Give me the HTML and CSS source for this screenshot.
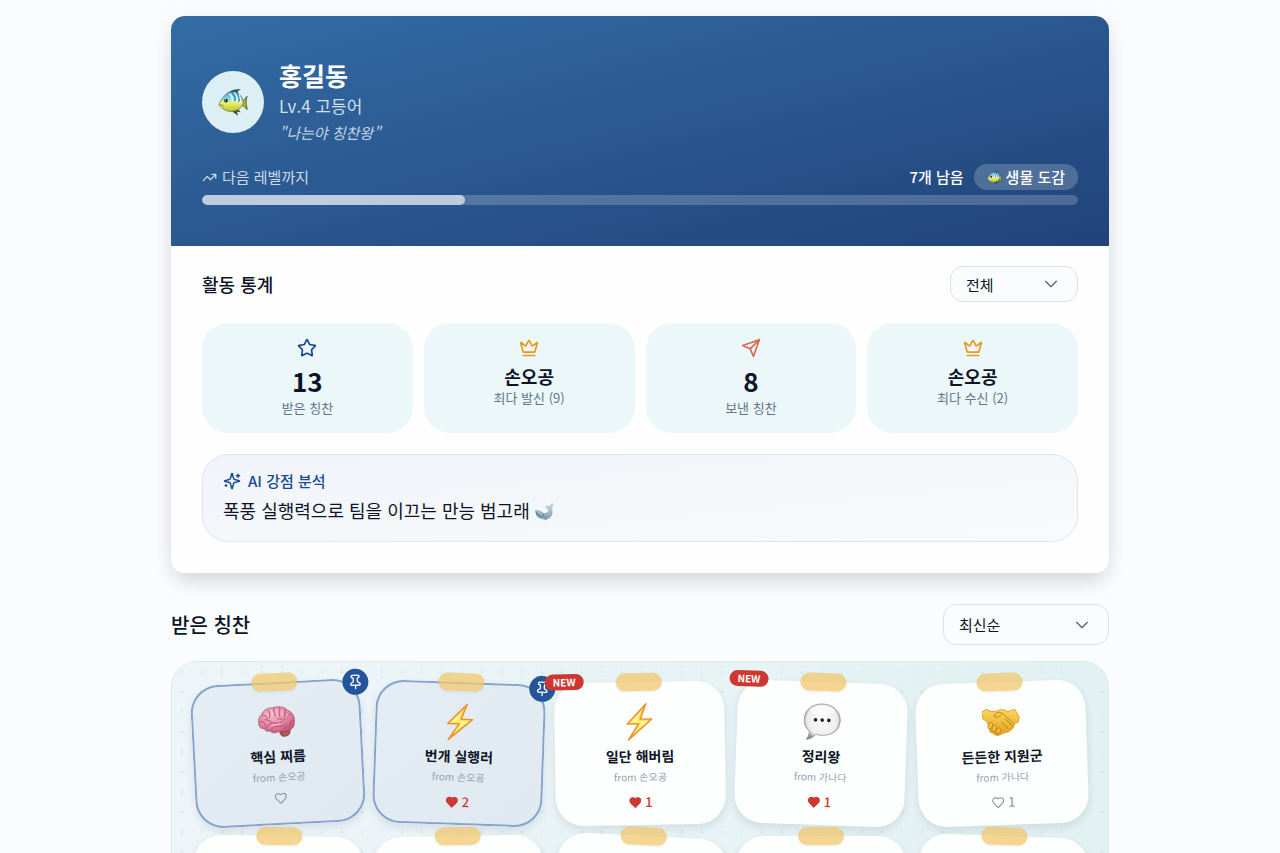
FILE: index.html
```html
<!DOCTYPE html>
<html lang="ko">
<head>
  <meta charset="UTF-8">
  <meta name="viewport" content="width=device-width, initial-scale=1.0">
  <title>홍길동 - 받은 칭찬</title>
  <link rel="stylesheet" href="styles.css">
</head>
<body>
  <!-- 아이콘 모음 -->
  <svg class="sprite" aria-hidden="true">
    <defs>
      <linearGradient id="fishBody" x1="0" y1="0" x2="0" y2="1">
        <stop offset="0" stop-color="#3fa6cf"/>
        <stop offset=".38" stop-color="#8fd8ec"/>
        <stop offset=".56" stop-color="#eef06e"/>
        <stop offset="1" stop-color="#b9c232"/>
      </linearGradient>
      <linearGradient id="boltFill" x1="0" y1="0" x2="0" y2="1">
        <stop offset="0" stop-color="#f9b233"/>
        <stop offset=".5" stop-color="#ffe94f"/>
        <stop offset="1" stop-color="#f29a2e"/>
      </linearGradient>
      <radialGradient id="brainFill" cx=".4" cy=".3" r=".8">
        <stop offset="0" stop-color="#f7b9cb"/>
        <stop offset=".6" stop-color="#e2809f"/>
        <stop offset="1" stop-color="#b84f6e"/>
      </radialGradient>
      <radialGradient id="bubbleFill" cx=".5" cy=".45" r=".56">
        <stop offset="0" stop-color="#ffffff"/>
        <stop offset=".75" stop-color="#ececec"/>
        <stop offset="1" stop-color="#8f8f8f"/>
      </radialGradient>
      <linearGradient id="handFill" x1="0" y1="0" x2="0" y2="1">
        <stop offset="0" stop-color="#ffd75a"/>
        <stop offset="1" stop-color="#dfa11d"/>
      </linearGradient>
      <linearGradient id="whaleFill" x1="0" y1="0" x2="0" y2="1">
        <stop offset="0" stop-color="#cfdfe9"/>
        <stop offset="1" stop-color="#7d9dae"/>
      </linearGradient>
    </defs>
    <symbol id="fish" viewBox="0 0 32 32">
      <path d="M9 8C13 3 18 2 25 2c-3 1-4 2-4 6l-6-2z" fill="#2d5c70"/>
      <path d="M14 25c2 2 5 3 7 6 0-2 0-3-1-5l4 1-2-3z" fill="#3c4b1d"/>
      <path d="M25 16c2-1 4-4 6-6-1 3-1 5-1 7 0 2 1 4 1 7-2-2-4-4-6-5z" fill="#b9b13b" stroke="#454e1e" stroke-width=".9"/>
      <path d="M1 19C4 12 8 6 15 5c7 0 12 6 12 12-2 6-7 9-13 9C8 26 4 23 1 19z" fill="url(#fishBody)" stroke="#4f6a34" stroke-width=".7"/>
      <path d="M12 7c3 2 4 5 3 9M17 6c3 2 4 6 3 10M22 8c2 3 2 6 2 9" fill="none" stroke="#f1fbfb" stroke-width="1.500"/>
      <path d="M15 6c2 2 4 5 3 9M20 7c2 2 3 6 2 9" fill="none" stroke="#2489bb" stroke-width="1.300"/>
      <circle cx="8.500" cy="14.500" r="2" fill="#17211f"/>
      <circle cx="8" cy="14" r=".6" fill="#fff"/>
      <path d="M2 19c2 0 3 0 4 2" fill="none" stroke="#85882a"/>
    </symbol>
    <symbol id="whale" viewBox="0 0 32 32">
      <path d="M24 12c-1-2-4-3-5-6 3-1 5 0 7 1 1-3 2-5 5-6 1 4 0 6-2 8 3 7 2 13-3 17-4 3-9 4-14 2C5 26 1 20 1 13c6 0 10 2 14 5 5 1 9-1 9-6z" fill="url(#whaleFill)" stroke="#7594a5" stroke-width=".6"/>
      <path d="M1 14c5 7 10 10 17 10-3 4-8 4-11 2-4-3-6-7-6-12z" fill="#5d7e92"/>
      <path d="M4 21c4 4 8 6 13 5M6 25c4 2 7 3 11 2" fill="none" stroke="#c5d7e1" stroke-width=".8"/>
      <path d="M20 23c1 3 1 5-1 8-2-2-3-5-2-8z" fill="#7797a8"/>
      <circle cx="15" cy="21" r=".9" fill="#1f3644"/>
    </symbol>
    <symbol id="brain" viewBox="0 0 40 40">
      <path d="M26 29l8-2c2 4-1 9-6 9-3 0-5-3-6-6z" fill="#9d5048"/>
      <path d="M3 25C0 21 1 14 5 11c2-4 7-7 12-6 5-2 12-1 15 3 5 2 8 7 7 12 0 5-2 9-7 9-3 2-6 2-9 0-3 3-8 3-10 0-3 1-6-1-6-3-2 0-3 0-4-1z" fill="url(#brainFill)" stroke="#a94868" stroke-width=".7"/>
      <path d="M6 12c3 0 5 2 5 4M12 7c2 2 2 5 1 8M18 5c-1 4 2 5 1 9M24 5c1 3-2 5 0 9M30 7c-2 3 1 5-1 8M35 12c-3 1-3 4-4 5M3 19c3-1 5 1 5 4M38 19c-3 0-4 3-4 6M9 26c2-5 6-6 11-5 4 1 7-1 9-4M14 28c2-3 5-4 9-3 4 0 6-2 8-4M27 28c1-2 3-3 5-3M8 17c3 0 5 1 7 3M21 16c2 1 3 2 5 1" fill="none" stroke="#ac4a6c" stroke-width=".9" stroke-linecap="round"/>
      <path d="M9 10c2 1 2 3 2 4M15 7c1 2 1 4 1 6M21 7c0 3 1 4 0 6M27 8c0 3 0 4-1 6M33 12c-2 1-2 3-2 4M15 24c3-2 6-1 9-2" fill="none" stroke="#fbd0dc" stroke-width=".9" stroke-linecap="round"/>
      <path d="M26 32c3 1 5 0 7-2M27 34c2 0 4 0 5-2" fill="none" stroke="#c37868" stroke-width=".7"/>
    </symbol>
    <symbol id="bolt" viewBox="0 0 40 40">
      <path d="M27 1L7 22h12L8 39l25-22H21z" fill="url(#boltFill)" stroke="#e9922a" stroke-width="1.500" stroke-linejoin="round"/>
      <path d="M23 7L11 20h11l-9 13 16-14H18z" fill="#fff9b8" opacity=".75"/>
    </symbol>
    <symbol id="bubble" viewBox="0 0 40 40">
      <path d="M20 1c11 0 19 7 19 17s-8 16-19 16c-2 0-4 0-6-1-2 3-6 5-10 6 2-3 3-6 3-9-4-3-6-7-6-12C1 8 9 1 20 1z" fill="url(#bubbleFill)" stroke="#8c8c8c" stroke-width=".8"/>
      <ellipse cx="20" cy="8" rx="13" ry="5" fill="#fff" opacity=".6"/>
      <circle cx="13" cy="18" r="1.900" fill="#202020"/>
      <circle cx="20" cy="18" r="1.900" fill="#202020"/>
      <circle cx="27" cy="18" r="1.900" fill="#202020"/>
    </symbol>
    <symbol id="handshake" viewBox="0 0 40 40">
      <path d="M0 9l5-3c4 3 8 3 12 2 4-2 7-1 10 1 3 0 5-1 8-2l5 9-2 5-4 1c0 5-4 8-8 9l-4 1-5 2c-3 0-5-1-6-3-3 0-4-2-3-5l-3-7-4-3z" fill="url(#handFill)" stroke="#c98a18" stroke-width=".7" stroke-linejoin="round"/>
      <path d="M13 13c3-4 6-4 9-2l11 11M13 13c1 3 5 2 8-1M25 17l7 8M21 20l6 7" fill="none" stroke="#b47815" stroke-width=".9" stroke-linecap="round"/>
      <g fill="#f5c03a" stroke="#b47815" stroke-width=".7">
        <rect x="7" y="20" width="4" height="7" rx="2" transform="rotate(25 9 23)"/>
        <rect x="11" y="23" width="4" height="7" rx="2" transform="rotate(25 13 26)"/>
        <rect x="15" y="26" width="4" height="6" rx="2" transform="rotate(25 17 29)"/>
      </g>
    </symbol>
    <symbol id="crown" viewBox="0 0 24 24">
      <path d="M11.562 3.266a.5.5 0 0 1 .876 0L15.390 8.870a1 1 0 0 0 1.516.294L21.183 5.500a.5.5 0 0 1 .798.519l-2.834 10.246a1 1 0 0 1-.956.734H5.810a1 1 0 0 1-.957-.734L2.020 6.020a.5.5 0 0 1 .798-.519l4.276 3.664a1 1 0 0 0 1.516-.294zM5 21h14"/>
    </symbol>
    <symbol id="chevron" viewBox="0 0 24 24"><path d="M4 8l8 8 8-8"/></symbol>
    <symbol id="heart" viewBox="0 0 24 24">
      <path d="M19 14c1.490-1.460 3-3.210 3-5.500A5.500 5.500 0 0 0 16.500 3c-1.760 0-3 .5-4.500 2-1.500-1.500-2.740-2-4.500-2A5.500 5.500 0 0 0 2 8.500c0 2.300 1.500 4.050 3 5.500l7 7z"/>
    </symbol>
    <symbol id="pin" viewBox="0 0 24 24">
      <path d="M12 17v5M9 10.760a2 2 0 0 1-1.110 1.790l-1.780.9A2 2 0 0 0 5 15.240V16a1 1 0 0 0 1 1h12a1 1 0 0 0 1-1v-.760a2 2 0 0 0-1.110-1.790l-1.780-.9A2 2 0 0 1 15 10.760V7a1 1 0 0 1 1-1 2 2 0 0 0 0-4H8a2 2 0 0 0 0 4 1 1 0 0 1 1 1z"/>
    </symbol>
  </svg>

  <main class="container">
    <!-- 프로필 카드 -->
    <section class="profile">
      <header class="profile-header">
        <div class="user">
          <div class="avatar"><svg class="avatar-icon"><use href="#fish"/></svg></div>
          <div>
            <h1 class="user-name">홍길동</h1>
            <p class="user-level">Lv.4 고등어</p>
            <p class="user-quote">"나는야 칭찬왕"</p>
          </div>
        </div>
        <div class="level-row">
          <span class="level-label">
            <svg class="line-icon trend" viewBox="0 0 24 24"><path d="M22 7l-8.500 8.500-5-5L2 17M16 7h6v6"/></svg>
            다음 레벨까지
          </span>
          <span class="level-right">
            <span>7개 남음</span>
            <button type="button" class="dex-btn"><svg class="dex-icon"><use href="#fish"/></svg>생물 도감</button>
          </span>
        </div>
        <div class="progress" role="progressbar" aria-label="다음 레벨까지" aria-valuenow="30" aria-valuemin="0" aria-valuemax="100">
          <div class="progress-fill" style="width: 30%"></div>
        </div>
      </header>

      <div class="profile-body">
        <div class="title-row">
          <h2 class="stats-title" id="statsTitle">활동 통계</h2>
          <div class="select-box">
            <select class="select select-small" aria-labelledby="statsTitle">
              <option>전체</option>
            </select>
            <svg class="line-icon select-arrow"><use href="#chevron"/></svg>
          </div>
        </div>

        <div class="stats">
          <div class="stat">
            <svg class="line-icon stat-icon blue" viewBox="0 0 24 24"><path d="M11.525 2.295a.53.53 0 0 1 .95 0l2.310 4.679a2.120 2.120 0 0 0 1.595 1.160l5.166.756a.53.53 0 0 1 .294.904l-3.736 3.638a2.120 2.120 0 0 0-.611 1.878l.882 5.140a.53.53 0 0 1-.771.560l-4.618-2.428a2.120 2.120 0 0 0-1.973 0L6.396 21.010a.53.53 0 0 1-.770-.560l.881-5.139a2.120 2.120 0 0 0-.611-1.879L2.160 9.795a.53.53 0 0 1 .294-.906l5.165-.755a2.120 2.120 0 0 0 1.597-1.160z"/></svg>
            <strong class="stat-number">13</strong>
            <span class="stat-label">받은 칭찬</span>
          </div>
          <div class="stat">
            <svg class="line-icon stat-icon gold"><use href="#crown"/></svg>
            <strong class="stat-name">손오공</strong>
            <span class="stat-label">최다 발신 (9)</span>
          </div>
          <div class="stat">
            <svg class="line-icon stat-icon coral" viewBox="0 0 24 24"><path d="M22 2L15 22l-4-9-9-4zM22 2L11 13"/></svg>
            <strong class="stat-number">8</strong>
            <span class="stat-label">보낸 칭찬</span>
          </div>
          <div class="stat">
            <svg class="line-icon stat-icon gold"><use href="#crown"/></svg>
            <strong class="stat-name">손오공</strong>
            <span class="stat-label">최다 수신 (2)</span>
          </div>
        </div>

        <div class="ai-box">
          <h3 class="ai-title">
            <svg class="line-icon ai-icon" viewBox="0 0 24 24"><path d="M9.937 15.500A2 2 0 0 0 8.500 14.063l-6.135-1.582a.5.5 0 0 1 0-.962L8.500 9.936A2 2 0 0 0 9.937 8.500l1.582-6.135a.5.5 0 0 1 .963 0L14.063 8.500A2 2 0 0 0 15.500 9.937l6.135 1.581a.5.5 0 0 1 0 .964L15.500 14.063a2 2 0 0 0-1.437 1.437l-1.582 6.135a.5.5 0 0 1-.963 0zM20 3v4M22 5h-4M4 17v2M5 18H3"/></svg>
            AI 강점 분석
          </h3>
          <p class="ai-text">폭풍 실행력으로 팀을 이끄는 만능 범고래 <svg class="ai-emoji"><use href="#whale"/></svg></p>
        </div>
      </div>
    </section>

    <!-- 받은 칭찬 -->
    <div class="title-row list-head">
      <h2 class="list-title" id="listTitle">받은 칭찬</h2>
      <div class="select-box">
        <select class="select select-large" aria-labelledby="listTitle">
          <option>최신순</option>
        </select>
        <svg class="line-icon select-arrow"><use href="#chevron"/></svg>
      </div>
    </div>

    <section class="board">
      <article class="note pinned tilt-l3">
        <span class="tape"></span>
        <span class="pin"><svg class="line-icon pin-icon"><use href="#pin"/></svg></span>
        <svg class="note-emoji"><use href="#brain"/></svg>
        <h3 class="note-title">핵심 찌름</h3>
        <p class="note-from">from 손오공</p>
        <button type="button" class="like" aria-label="좋아요"><svg class="line-icon heart"><use href="#heart"/></svg></button>
      </article>
      <article class="note pinned tilt-r2">
        <span class="tape"></span>
        <span class="pin"><svg class="line-icon pin-icon"><use href="#pin"/></svg></span>
        <svg class="note-emoji"><use href="#bolt"/></svg>
        <h3 class="note-title">번개 실행러</h3>
        <p class="note-from">from 손오공</p>
        <button type="button" class="like liked"><svg class="line-icon heart"><use href="#heart"/></svg><span>2</span></button>
      </article>
      <article class="note tilt-l1">
        <span class="tape"></span>
        <span class="new">NEW</span>
        <svg class="note-emoji"><use href="#bolt"/></svg>
        <h3 class="note-title">일단 해버림</h3>
        <p class="note-from">from 손오공</p>
        <button type="button" class="like liked"><svg class="line-icon heart"><use href="#heart"/></svg><span>1</span></button>
      </article>
      <article class="note tilt-r2">
        <span class="tape"></span>
        <span class="new">NEW</span>
        <svg class="note-emoji"><use href="#bubble"/></svg>
        <h3 class="note-title">정리왕</h3>
        <p class="note-from">from 가나다</p>
        <button type="button" class="like liked"><svg class="line-icon heart"><use href="#heart"/></svg><span>1</span></button>
      </article>
      <article class="note tilt-l2">
        <span class="tape"></span>
        <svg class="note-emoji"><use href="#handshake"/></svg>
        <h3 class="note-title">든든한 지원군</h3>
        <p class="note-from">from 가나다</p>
        <button type="button" class="like"><svg class="line-icon heart"><use href="#heart"/></svg><span>1</span></button>
      </article>
      <article class="note tilt-r1"><span class="tape"></span></article>
      <article class="note tilt-l1"><span class="tape"></span></article>
      <article class="note tilt-r3"><span class="tape"></span></article>
      <article class="note"><span class="tape"></span></article>
      <article class="note tilt-r2"><span class="tape"></span></article>
    </section>
  </main>
</body>
</html>
```
FILE: styles.css
```css
* {
  box-sizing: border-box;
  margin: 0;
  padding: 0;
}
body {
  font-family: "Noto Sans CJK KR", "Noto Sans", sans-serif;
  color: #0d1427;
  background: #fafcfe;
  padding: 16px;
}
button,
select {
  font: inherit;
  color: inherit;
  cursor: pointer;
}
.sprite {
  position: absolute;
  width: 0;
  height: 0;
}
.line-icon {
  fill: none;
  stroke: currentColor;
  stroke-width: 2;
  stroke-linecap: round;
  stroke-linejoin: round;
}
.container {
  max-width: 938px;
  margin: 0 auto;
}

/* profile */
.profile {
  background: #fefefe;
  border-radius: 14px;
  overflow: hidden;
  box-shadow: 0 12px 20px -4px rgba(20, 30, 50, 0.14), 0 2px 24px rgba(20, 30, 50, 0.06);
}
.profile-header {
  background: linear-gradient(to bottom right, #346ca4, #20437a);
  color: #ffffff;
  padding: 42px 31px 41px;
}
.user {
  display: flex;
  align-items: center;
  gap: 15px;
  margin-bottom: 18px;
}
.avatar {
  display: flex;
  align-items: center;
  justify-content: center;
  width: 62px;
  height: 62px;
  border-radius: 50%;
  background: #dceff5;
}
.avatar-icon {
  width: 30px;
  height: 30px;
}
.user-name {
  font-size: 25px;
  line-height: 34px;
  font-weight: 700;
}
.user-level {
  font-size: 17px;
  line-height: 28px;
  color: #d3dfec;
}
.user-quote {
  font-size: 15px;
  line-height: 26px;
  font-style: italic;
  color: #c5d3e4;
}
.level-row {
  display: flex;
  align-items: center;
  justify-content: space-between;
  margin-bottom: 5px;
  font-size: 15px;
  line-height: 24px;
}
.level-label,
.level-right {
  display: flex;
  align-items: center;
}
.level-label {
  gap: 5px;
  color: #cbd9e8;
}
.trend {
  width: 15px;
  height: 15px;
}
.level-right {
  gap: 10px;
  font-weight: 500;
}
.dex-btn {
  display: flex;
  align-items: center;
  gap: 4px;
  height: 26px;
  padding: 0 13px;
  border: none;
  border-radius: 13px;
  background: rgba(255, 255, 255, 0.2);
}
.dex-icon {
  width: 15px;
  height: 15px;
}
.progress {
  height: 10px;
  border-radius: 5px;
  background: rgba(255, 255, 255, 0.2);
  overflow: hidden;
}
.progress-fill {
  height: 100%;
  border-radius: 5px;
  background: rgba(255, 255, 255, 0.62);
}
.profile-body {
  padding: 20px 31px 31px;
}
.title-row {
  display: flex;
  align-items: center;
  justify-content: space-between;
}
.stats-title {
  font-size: 18px;
  font-weight: 500;
}
.select-box {
  position: relative;
}
.select {
  appearance: none;
  padding: 0 15px;
  border: 1px solid #d8e3e9;
  border-radius: 13px;
  background: #fafcfe;
  font-size: 15px;
}
.select-small {
  width: 128px;
  height: 36px;
}
.select-large {
  width: 166px;
  height: 41px;
}
.select-arrow {
  position: absolute;
  top: 50%;
  right: 19px;
  width: 16px;
  height: 16px;
  margin-top: -8px;
  color: #5b6472;
  pointer-events: none;
}
.stats {
  display: grid;
  grid-template-columns: repeat(4, 1fr);
  gap: 11px;
  margin: 21px 0;
}
.stat {
  display: flex;
  flex-direction: column;
  align-items: center;
  padding: 15px 15px 17px;
  border-radius: 26px;
  background: #ebf7f9;
}
.stat-icon {
  width: 20px;
  height: 20px;
  margin-bottom: 4px;
}
.blue {
  color: #164a94;
}
.gold {
  color: #e59a20;
}
.coral {
  color: #d9694a;
}
.stat-number {
  font-size: 26px;
  line-height: 38px;
}
.stat-name {
  font-size: 18px;
  line-height: 28px;
}
.stat-label {
  font-size: 13px;
  line-height: 16px;
  color: #64748b;
}
.ai-box {
  padding: 15px 20px 17px;
  border: 1px solid #dde5f2;
  border-radius: 26px;
  background: linear-gradient(to bottom right, #f1f4f9, #f8fbfb);
}
.ai-title {
  display: flex;
  align-items: center;
  gap: 7px;
  margin-bottom: 4px;
  font-size: 15px;
  line-height: 22px;
  font-weight: 500;
  color: #164a94;
}
.ai-icon {
  width: 18px;
  height: 18px;
}
.ai-text {
  font-size: 18px;
  line-height: 28px;
}
.ai-emoji {
  width: 18px;
  height: 18px;
  vertical-align: -3px;
}

/* praise list */
.list-head {
  margin: 31px 0 16px;
}
.list-title {
  font-size: 20px;
  font-weight: 500;
}
.board {
  display: grid;
  grid-template-columns: repeat(5, 1fr);
  gap: 11px;
  padding: 20px 21px;
  border: 1px solid #dfeaed;
  border-radius: 26px;
  background:
    radial-gradient(circle, rgba(190, 212, 220, 0.35) 1px, transparent 2px) 0 0 / 20px 20px,
    linear-gradient(to right, #eef5f8, #e2f1f2);
}
.note {
  position: relative;
  display: flex;
  flex-direction: column;
  align-items: center;
  min-height: 143px;
  padding: 21px 10px 13px;
  border-radius: 28px;
  background: #fdfefe;
  box-shadow: 0 4px 8px rgba(40, 70, 90, 0.12);
}
.pinned {
  background: linear-gradient(to bottom right, #e4edf3, #dfe9ef);
  box-shadow: inset 0 0 0 2px #86a3cd, 0 4px 8px rgba(40, 70, 90, 0.12);
}
.tilt-l3 { transform: rotate(-3deg); }
.tilt-l2 { transform: rotate(-2deg); }
.tilt-l1 { transform: rotate(-1deg); }
.tilt-r1 { transform: rotate(1deg); }
.tilt-r2 { transform: rotate(2deg); }
.tilt-r3 { transform: rotate(3deg); }
.tape {
  position: absolute;
  top: -9px;
  left: 50%;
  width: 46px;
  height: 18px;
  margin-left: -23px;
  border-radius: 9px;
  background: rgba(240, 200, 108, 0.74);
  box-shadow: 0 1px 2px rgba(90, 80, 40, 0.1);
}
.pin {
  position: absolute;
  top: -9px;
  right: -9px;
  display: flex;
  align-items: center;
  justify-content: center;
  width: 26px;
  height: 26px;
  border-radius: 50%;
  background: #24559b;
  color: #ffffff;
}
.pin-icon {
  width: 16px;
  height: 16px;
}
.new {
  position: absolute;
  top: -9px;
  left: -9px;
  padding: 0 8px;
  border-radius: 8px;
  background: #cd3831;
  color: #ffffff;
  font-size: 10px;
  line-height: 16px;
  font-weight: 700;
}
.note-emoji {
  width: 38px;
  height: 38px;
  margin-bottom: 5px;
}
.note-title {
  font-size: 14px;
  line-height: 20px;
  font-weight: 700;
}
.note-from {
  margin: 3px 0 7px;
  font-size: 10px;
  line-height: 16px;
  color: #94a0b2;
}
.like {
  display: flex;
  align-items: center;
  gap: 3px;
  border: none;
  background: none;
  font-size: 13px;
  line-height: 20px;
  color: #8593a8;
}
.liked {
  color: #cd3831;
  font-weight: 500;
}
.heart {
  width: 13px;
  height: 13px;
}
.liked .heart {
  fill: currentColor;
}
```
